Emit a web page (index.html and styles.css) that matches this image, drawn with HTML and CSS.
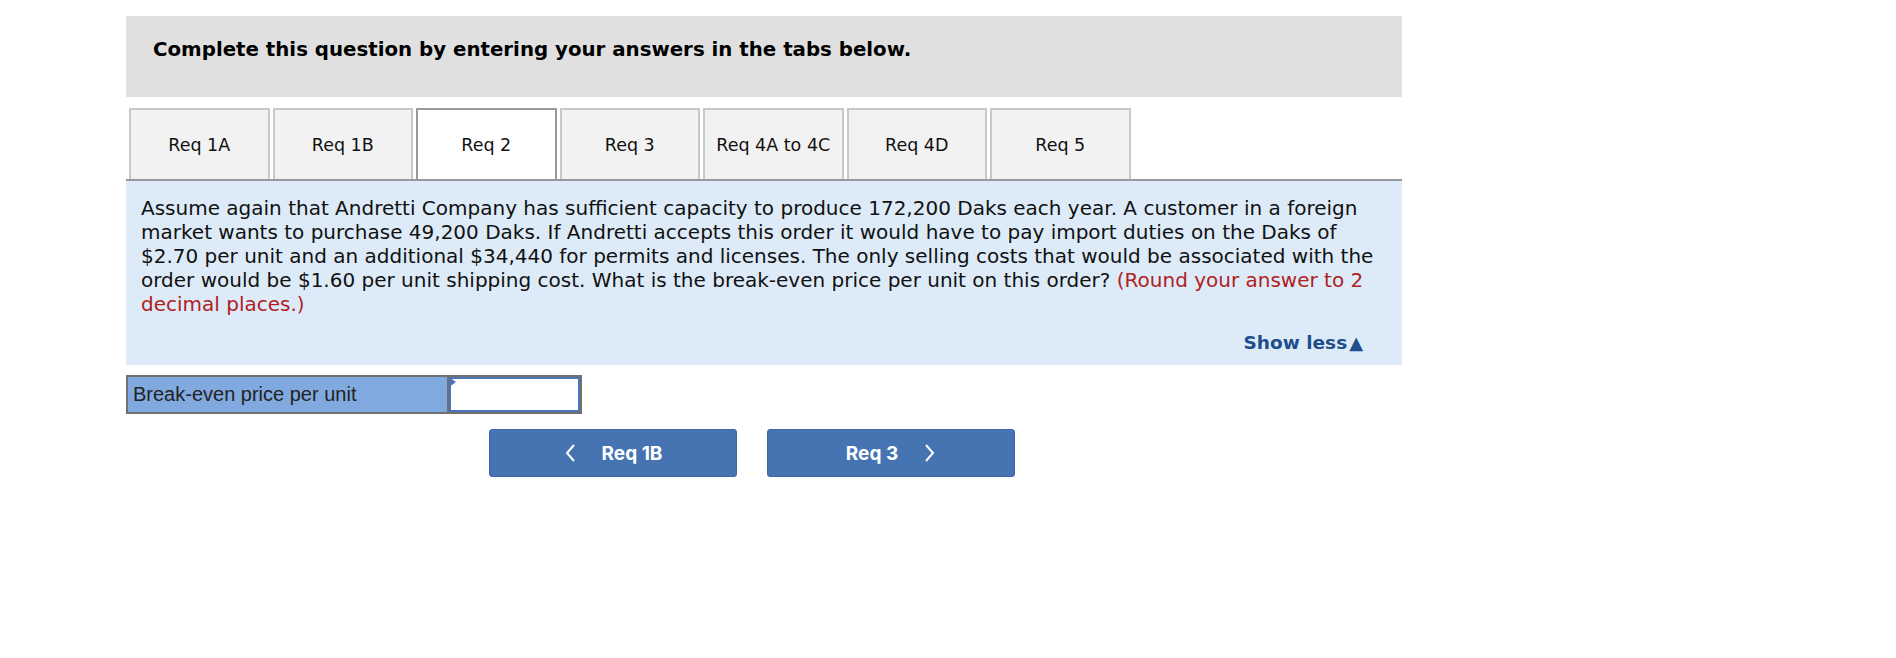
FILE: index.html
```html
<!DOCTYPE html>
<html>
<head>
<meta charset="utf-8">
<link rel="stylesheet" href="styles.css">
</head>
<body>
<div class="wrap">
  <div class="header">
    <h1 class="title">Complete this question by entering your answers in the tabs below.</h1>
  </div>
  <div class="tabs">
    <div class="tab">Req 1A</div>
    <div class="tab">Req 1B</div>
    <div class="tab active">Req 2</div>
    <div class="tab">Req 3</div>
    <div class="tab">Req 4A to 4C</div>
    <div class="tab">Req 4D</div>
    <div class="tab">Req 5</div>
  </div>
  <div class="panel">
    <p class="question">Assume again that Andretti Company has sufficient capacity to produce 172,200 Daks each year. A customer in a foreign market wants to purchase 49,200 Daks. If Andretti accepts this order it would have to pay import duties on the Daks of $2.70 per unit and an additional $34,440 for permits and licenses. The only selling costs that would be associated with the order would be $1.60 per unit shipping cost. What is the break-even price per unit on this order? <span class="hint">(Round your answer to 2 decimal places.)</span></p>
    <div class="show-row"><span class="show-less">Show less<span class="tri">&#9650;</span></span></div>
  </div>
  <div class="answer">
    <div class="answer-label">Break-even price per unit</div>
    <div class="answer-input"><span class="marker"></span></div>
  </div>
  <div class="nav">
    <button class="nav-btn"><svg class="chev" width="12" height="20" viewBox="0 0 12 20"><path d="M10 2 L3 10 L10 18" fill="none" stroke="#fff" stroke-width="2"/></svg><span>Req 1B</span></button>
    <button class="nav-btn"><span>Req 3</span><svg class="chev" width="12" height="20" viewBox="0 0 12 20"><path d="M2 2 L9 10 L2 18" fill="none" stroke="#fff" stroke-width="2"/></svg></button>
  </div>
</div>
</body>
</html>
```

FILE: styles.css
```css
html, body {
  margin: 0;
  padding: 0;
  background: #fff;
}
.wrap {
  margin: 16px 0 0 126px;
  width: 1276px;
}
.header {
  background: #e0e0e0;
  height: 81px;
  padding-left: 27px;
  box-sizing: border-box;
  padding-top: 22px;
}
.title {
  margin: 0;
  font-family: "DejaVu Sans", Verdana, sans-serif;
  font-weight: bold;
  font-size: 19.8px;
  line-height: 24px;
  color: #000;
}
.tabs {
  display: flex;
  gap: 3px;
  margin-top: 11px;
  padding-left: 3px;
  height: 71px;
}
.tab {
  width: 140.5px;
  box-sizing: border-box;
  height: 71px;
  background: #f2f2f2;
  border: 2px solid #c8c8c8;
  border-bottom: none;
  display: flex;
  align-items: center;
  justify-content: center;
  font-family: "DejaVu Sans", Verdana, sans-serif;
  font-size: 17.5px;
  color: #111;
  padding-top: 1px;
}
.tab.active {
  background: #fff;
  border-color: #999;
  margin-bottom: -2px;
  position: relative;
  z-index: 1;
}
.panel {
  border-top: 2px solid #999;
  background: #ddebf8;
  padding: 15px 15px 0 15px;
  height: 186px;
  box-sizing: border-box;
}
.question {
  margin: 0;
  font-family: "DejaVu Sans", Verdana, sans-serif;
  font-size: 20px;
  line-height: 24px;
  color: #111;
}
.hint {
  color: #b0211e;
}
.show-row {
  display: flex;
  justify-content: flex-end;
  padding-right: 24px;
  margin-top: 15px;
}
.show-less {
  font-family: "DejaVu Sans", Verdana, sans-serif;
  font-weight: bold;
  font-size: 18.5px;
  color: #1f4e8c;
  line-height: 24px;
}
.tri {
  font-size: 18px;
  margin-left: 2px;
}
.answer {
  display: flex;
  width: 456px;
  height: 39px;
  margin-top: 10px;
  border: 2px solid #707070;
  box-sizing: border-box;
  background: #707070;
  gap: 2px;
}
.answer-label {
  width: 319px;
  background: #80aadf;
  font-family: "Liberation Sans", Arial, sans-serif;
  font-size: 20px;
  color: #222;
  display: flex;
  align-items: center;
  padding-left: 5px;
  box-sizing: border-box;
}
.answer-input {
  flex: 1;
  background: #fff;
  border: 2px solid #4a74b5;
  position: relative;
}
.marker {
  position: absolute;
  left: -2px;
  top: -2px;
  width: 0;
  height: 0;
  border-top: 5px solid transparent;
  border-bottom: 5px solid transparent;
  border-left: 7px solid #4a74b5;
}
.nav {
  display: flex;
  gap: 30px;
  margin: 15px 0 0 363px;
}
.nav-btn {
  width: 248px;
  height: 48px;
  background: #4674b3;
  border: 1px solid #3e69a6;
  border-radius: 3px;
  color: #fff;
  font-family: Inter, "Liberation Sans", sans-serif;
  font-weight: 700;
  font-size: 19px;
  display: flex;
  align-items: center;
  justify-content: center;
  gap: 26px;
  padding: 0;
}
```
